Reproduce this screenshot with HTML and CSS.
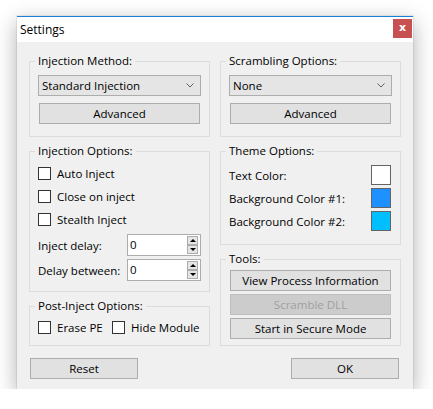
FILE: index.html
```html
<!DOCTYPE html>
<html>
<head>
<meta charset="utf-8">
<link rel="stylesheet" href="styles.css">
</head>
<body>
<div class="window">
  <div class="titlebar">
    <span class="title">Settings</span>
    <div class="close">x</div>
  </div>
  <div class="client">
    <div class="columns">
      <div class="col">
        <div class="group g-method">
          <div class="legend">Injection Method:</div>
          <div class="combo"><span>Standard Injection</span><svg class="chev" width="8" height="5" viewBox="0 0 8 5"><path d="M0.5 0.5 L4 4 L7.5 0.5" fill="none" stroke="#606060" stroke-width="1"/></svg></div>
          <div class="btn btn-group">Advanced</div>
        </div>
        <div class="group g-inj">
          <div class="legend">Injection Options:</div>
          <div class="check row-first"><span class="box"></span><span>Auto Inject</span></div>
          <div class="check row-next"><span class="box"></span><span>Close on inject</span></div>
          <div class="check row-next"><span class="box"></span><span>Stealth Inject</span></div>
          <div class="field field-first">
            <span>Inject delay:</span>
            <div class="spin"><span class="spin-val">0</span><div class="spin-btns"><div class="sbtn"><span class="tri-up"></span></div><div class="sbtn"><span class="tri-down"></span></div></div></div>
          </div>
          <div class="field field-next">
            <span>Delay between:</span>
            <div class="spin"><span class="spin-val">0</span><div class="spin-btns"><div class="sbtn"><span class="tri-up"></span></div><div class="sbtn"><span class="tri-down"></span></div></div></div>
          </div>
        </div>
        <div class="group g-post">
          <div class="legend">Post-Inject Options:</div>
          <div class="checks-row">
            <div class="check erase"><span class="box"></span><span>Erase PE</span></div>
            <div class="check"><span class="box"></span><span>Hide Module</span></div>
          </div>
        </div>
      </div>
      <div class="col">
        <div class="group g-method">
          <div class="legend">Scrambling Options:</div>
          <div class="combo"><span>None</span><svg class="chev" width="8" height="5" viewBox="0 0 8 5"><path d="M0.5 0.5 L4 4 L7.5 0.5" fill="none" stroke="#606060" stroke-width="1"/></svg></div>
          <div class="btn btn-group">Advanced</div>
        </div>
        <div class="group g-theme">
          <div class="legend">Theme Options:</div>
          <div class="theme-row row-first"><span>Text Color:</span><span class="swatch sw-white"></span></div>
          <div class="theme-row row-swatch"><span>Background Color #1:</span><span class="swatch sw-blue"></span></div>
          <div class="theme-row row-swatch"><span>Background Color #2:</span><span class="swatch sw-sky"></span></div>
        </div>
        <div class="group g-tools">
          <div class="legend">Tools:</div>
          <div class="btn btn-tool">View Process Information</div>
          <div class="btn btn-tool disabled">Scramble DLL</div>
          <div class="btn btn-tool">Start in Secure Mode</div>
        </div>
      </div>
    </div>
    <div class="footer">
      <div class="btn btn-foot">Reset</div>
      <div class="btn btn-foot">OK</div>
    </div>
  </div>
</div>
</body>
</html>
```

FILE: styles.css
```css
* { box-sizing: border-box; }
body {
  margin: 0;
  background: #ffffff;
  font-family: "Open Sans", "Noto Sans", sans-serif;
  font-size: 11.5px;
  color: #000;
}
.window {
  margin: 16px 0 0 17px;
  width: 396px;
  border-top: 1px solid #1a7fd6;
  background: #f0f0f0;
  box-shadow: 0 6px 20px rgba(0,0,0,0.32), 0 0 0 1px rgba(0,0,0,0.06);
}
.titlebar {
  height: 25px;
  background: #fff;
  display: flex;
  justify-content: space-between;
  align-items: flex-start;
}
.title {
  padding-left: 3px;
  line-height: 25px;
  font-size: 12px;
}
.close {
  width: 19px;
  height: 19px;
  margin: 2px 1px 0 0;
  background: #c75050;
  color: #fff;
  font-weight: bold;
  font-size: 11px;
  line-height: 17px;
  text-align: center;
  font-family: "DejaVu Sans", sans-serif;
}
.client {
  padding: 19px 12px 10px 12px;
}
.columns {
  display: flex;
  gap: 10px;
}
.col {
  width: 181px;
  display: flex;
  flex-direction: column;
  gap: 14px;
}
.group {
  border: 1px solid #dcdcdc;
  padding: 0 8px;
}
.legend {
  width: fit-content;
  margin: -9px 0 0 -3px;
  padding: 0 3px;
  line-height: 16px;
  height: 16px;
  background: #f0f0f0;
  white-space: nowrap;
}
.g-method { padding-bottom: 12px; }
.combo {
  height: 21px;
  margin-top: 6px;
  border: 1px solid #adadad;
  background: #e5e5e5;
  display: flex;
  align-items: center;
  justify-content: space-between;
  padding: 0 6px 0 3px;
}
.chev { display: block; }
.btn {
  height: 21px;
  border: 1px solid #adadad;
  background: #e1e1e1;
  display: flex;
  align-items: center;
  justify-content: center;
  white-space: nowrap;
}
.btn-group { margin: 7px 1px 0; }
.g-inj { padding-bottom: 10px; }
.check {
  display: flex;
  align-items: center;
  height: 13px;
  gap: 6px;
  white-space: nowrap;
}
.box {
  width: 13px;
  height: 13px;
  border: 1px solid #333;
  background: #fff;
  flex: none;
}
.row-first { margin-top: 8px; }
.row-next { margin-top: 10px; }
.field {
  display: flex;
  justify-content: space-between;
  align-items: center;
  height: 22px;
}
.field-first { margin-top: 8px; }
.field-next { margin-top: 3px; }
.spin {
  width: 74px;
  height: 22px;
  border: 1px solid #adadad;
  background: #fff;
  display: flex;
}
.spin-val {
  flex: 1;
  padding-left: 2px;
  line-height: 20px;
}
.spin-btns {
  width: 11px;
  margin: 1px 2px 1px 0;
  display: flex;
  flex-direction: column;
}
.sbtn {
  height: 9px;
  border: 1px solid #adadad;
  background: #e5e5e5;
  display: flex;
  align-items: center;
  justify-content: center;
}
.tri-up {
  width: 0;
  height: 0;
  border-left: 3px solid transparent;
  border-right: 3px solid transparent;
  border-bottom: 3px solid #000;
}
.tri-down {
  width: 0;
  height: 0;
  border-left: 3px solid transparent;
  border-right: 3px solid transparent;
  border-top: 3px solid #000;
}
.g-post { padding-bottom: 11px; }
.checks-row {
  display: flex;
  margin-top: 7px;
}
.erase { width: 74px; }
.g-theme { padding-bottom: 13px; }
.theme-row {
  display: flex;
  justify-content: space-between;
  align-items: center;
  height: 20px;
}
.theme-row.row-first { margin-top: 6px; }
.row-swatch { margin-top: 3px; }
.swatch {
  width: 20px;
  height: 20px;
  margin-right: 1px;
  border: 1px solid #646464;
}
.sw-white { background: #ffffff; }
.sw-blue { background: #1e90ff; }
.sw-sky { background: #00bfff; }
.g-tools { padding-bottom: 6px; }
.btn-tool { margin: 3px 1px 0; }
.btn.disabled {
  background: #cccccc;
  border-color: #bfbfbf;
  color: #a0a0a0;
}
.footer {
  display: flex;
  justify-content: space-between;
  margin-top: 12px;
  padding: 0 2px 0 1px;
}
.btn-foot { width: 108px; }
```
